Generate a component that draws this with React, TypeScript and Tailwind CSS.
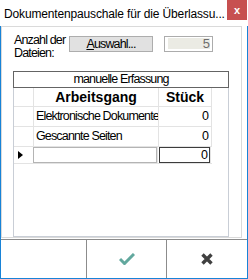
import React from "react";

const rows = [
  { name: "Elektronische Dokumente", count: 0 },
  { name: "Gescannte Seiten", count: 0 },
];

function CheckIcon() {
  return (
    <svg width="16" height="12" viewBox="0 0 16 12">
      <path d="M1 6 L5.5 10.5 L15 1" fill="none" stroke="#62a89e" strokeWidth="3" />
    </svg>
  );
}

function CrossIcon() {
  return (
    <svg width="12" height="12" viewBox="0 0 12 12">
      <path d="M1.5 1.5 L10.5 10.5 M10.5 1.5 L1.5 10.5" fill="none" stroke="#404040" strokeWidth="3.4" />
    </svg>
  );
}

export default function App() {
  return (
    <div className="w-[248px] h-[279px] bg-white flex flex-col text-black font-['Liberation_Sans',Arial,sans-serif]">
      {/* title bar */}
      <div className="h-[26px] flex items-start shrink-0">
        <div className="flex-1 pl-[4px] pt-[7px] text-[12px] leading-[14px] tracking-[-0.15px] whitespace-nowrap overflow-hidden">
          Dokumentenpauschale für die Überlassu...
        </div>
        <div className="w-[20px] h-[20px] bg-[#c75050] flex items-center justify-center text-white text-[11px] font-bold leading-none mr-[1px]">
          x
        </div>
      </div>

      {/* window body */}
      <div className="flex-1 flex flex-col border-x border-b border-[#1883d7]">
        <div className="w-[241px] h-[212px] border border-[#dadada] flex flex-col text-[12.5px] tracking-[-0.85px] shrink-0">
          <div className="flex items-start pt-[9px]">
            <div className="w-[67px] pl-[12px] -mt-[2px] leading-[13px]">
              Anzahl der
              <br />
              Dateien:
            </div>
            <div className="w-[84px] h-[16px] bg-[#e1e1e1] border border-[#adadad] flex items-center justify-center leading-none">
              <span>
                <span className="underline">A</span>uswahl...
              </span>
            </div>
            <div className="ml-[11px] w-[49px] h-[16px] border border-[#acacac] bg-white pl-[3px] pr-[2px] pt-[1px] pb-[2px]">
              <div className="h-full bg-[#ebebe4] text-[#6d6d6d] text-right leading-[11px] text-[13px] tracking-normal">5</div>
            </div>
          </div>

          {/* group */}
          <div className="ml-[11px] mt-[11px] w-[216px] h-[169px] flex flex-col border-x border-b border-[#c9ced6]">
            <div className="-mx-px h-[17px] border border-[#646464] flex items-center justify-center leading-none">
              manuelle Erfassung
            </div>
            <div className="flex flex-col w-[198px]">
              <div className="flex h-[19px] border-b border-[#e3e3e3] tracking-normal">
                <div className="w-[20px] border-r border-[#e3e3e3]" />
                <div className="w-[125px] border-r border-[#e3e3e3] flex items-center justify-center font-bold text-[14px] leading-none">
                  Arbeitsgang
                </div>
                <div className="w-[53px] border-r border-[#e3e3e3] flex items-center justify-center font-bold text-[14px] leading-none">
                  Stück
                </div>
              </div>
              {rows.map((r) => (
                <div key={r.name} className="flex h-[20px] border-b border-[#e3e3e3]">
                  <div className="w-[20px] border-r border-[#e3e3e3]" />
                  <div className="w-[125px] border-r border-[#e3e3e3] flex items-center pl-[2px] whitespace-nowrap overflow-hidden leading-none">
                    {r.name}
                  </div>
                  <div className="w-[53px] border-r border-[#e3e3e3] flex items-center justify-end pr-[3px] leading-none">
                    {r.count}
                  </div>
                </div>
              ))}
              <div className="flex h-[17px] border-b border-[#e3e3e3]">
                <div className="w-[20px] border-r border-[#e3e3e3] flex items-center pl-[4px]">
                  <div className="w-0 h-0 border-y-[4px] border-y-transparent border-l-[5px] border-l-black" />
                </div>
                <div className="w-[125px] -ml-px border-r border-[#e3e3e3] flex items-start">
                  <div className="w-[125px] h-[16px] border border-[#b4b4b4] bg-white" />
                </div>
                <div className="w-[53px] border-r border-[#e3e3e3] flex items-start pl-[1px]">
                  <div className="w-[51px] h-[16px] border border-[#3c3c3c] flex items-center justify-end pr-[2px] leading-none">
                    0
                  </div>
                </div>
              </div>
            </div>
          </div>
        </div>

        {/* button bar */}
        <div className="mt-[1px] flex-1 flex border-t border-[#8c8c8c]">
          <div className="w-[86px] border-r border-[#8c8c8c]" />
          <div className="w-[80px] border-r border-[#8c8c8c] flex items-center justify-center">
            <CheckIcon />
          </div>
          <div className="flex-1 flex items-center justify-center">
            <CrossIcon />
          </div>
        </div>
      </div>
    </div>
  );
}
